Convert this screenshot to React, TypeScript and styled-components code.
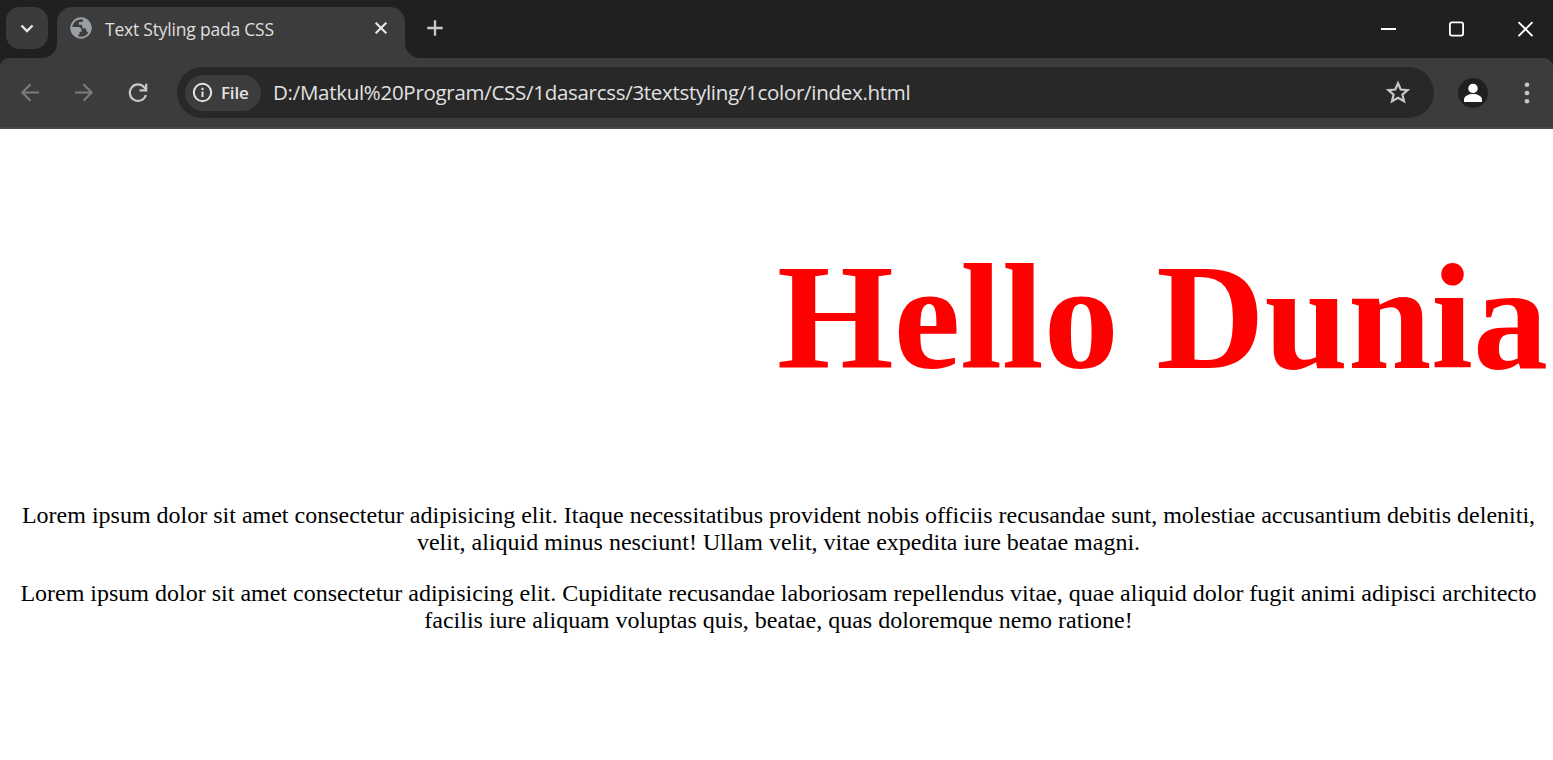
import React from "react";
import styled, { createGlobalStyle } from "styled-components";

const GlobalStyle = createGlobalStyle`
  * { box-sizing: border-box; }
  body { margin: 0; background: #fff; overflow: hidden; }
`;

const frame = "#1f2120";
const chrome = "#3c3c3c";

const Window = styled.div`
  width: 1553px;
  height: 760px;
  display: flex;
  flex-direction: column;
  background: #fff;
  overflow: hidden;
`;

const TitleBar = styled.header`
  flex: none;
  height: 58px;
  display: flex;
  align-items: flex-start;
  padding: 7px 0 0 6px;
  background: ${frame};
`;

const TabSearch = styled.button`
  width: 42px;
  height: 42px;
  margin-right: 9px;
  padding: 0;
  border: 0;
  border-radius: 14px;
  background: #3a3b3d;
  display: flex;
  align-items: center;
  justify-content: center;
`;

const Tab = styled.div`
  position: relative;
  width: 348px;
  height: 51px;
  display: flex;
  align-items: flex-start;
  padding: 9px 17px 0 13px;
  border-radius: 15px 15px 0 0;
  background: ${chrome};

  &::before, &::after {
    content: "";
    position: absolute;
    bottom: 0;
    width: 15px;
    height: 15px;
  }
  &::before {
    left: -15px;
    background: radial-gradient(circle at 0 0, transparent 14.5px, ${chrome} 15.5px);
  }
  &::after {
    right: -15px;
    background: radial-gradient(circle at 100% 0, transparent 14.5px, ${chrome} 15.5px);
  }
`;

const TabTitle = styled.span`
  flex: 1;
  margin-left: 12px;
  font: 17.5px/24px "Open Sans", sans-serif;
  letter-spacing: -0.21px;
  color: #dfdfdf;
  white-space: nowrap;
  padding-top: 1px;
`;

const CloseTab = styled.span`
  display: flex;
  padding-top: 5px;
`;

const NewTab = styled.span`
  display: flex;
  margin: 13px 0 0 22px;
`;

const WindowControls = styled.div`
  display: flex;
  margin: 14px 19px 0 auto;
  gap: 52px;
`;

const ToolbarBack = styled.div`
  flex: none;
  background: ${frame};
`;

const Toolbar = styled.div`
  height: 71px;
  display: flex;
  align-items: center;
  padding: 0 16px 2px 18px;
  border-bottom: 2px solid #484647;
  border-radius: 9px 9px 0 0;
  background: ${chrome};
`;

const NavButtons = styled.nav`
  display: flex;
  gap: 30px;
  width: 159px;
`;

const AddressBar = styled.div`
  width: 1257px;
  height: 51px;
  margin-top: 2px;
  display: flex;
  align-items: center;
  padding: 0 23px 0 8px;
  border-radius: 26px;
  background: #282828;
`;

const FileChip = styled.div`
  width: 76px;
  height: 36px;
  display: flex;
  align-items: center;
  gap: 8px;
  padding-left: 7px;
  border-radius: 18px;
  background: ${chrome};
  font: 600 17px/24px "Open Sans", sans-serif;
  letter-spacing: -0.2px;
  color: #e3e3e3;
`;

const Url = styled.span`
  flex: 1;
  margin-left: 12px;
  padding-bottom: 2px;
  font: 20.5px/28px "Open Sans", sans-serif;
  letter-spacing: -0.29px;
  color: #e1e1e1;
  white-space: nowrap;
`;

const Profile = styled.div`
  width: 30px;
  height: 30px;
  margin: 2px auto 0 24px;
  border-radius: 50%;
  background: ${frame};
  display: flex;
`;

const MenuIcon = styled.span`
  display: flex;
  padding-top: 2px;
`;

const Page = styled.main`
  flex: 1;
  padding: 0 4px 0 8px;
  font-family: "Liberation Serif", serif;
`;

const Heading = styled.h1`
  margin: 102px 1px 99px 0;
  font-size: 150px;
  line-height: 172px;
  font-weight: 700;
  color: #f00;
  text-align: right;
  white-space: nowrap;
`;

const Paragraph = styled.p`
  margin: 0 0 24px;
  font-size: 24px;
  line-height: 27px;
  color: #000;
  text-align: center;
`;

export default function App() {
  return (
    <Window>
      <GlobalStyle />
      <TitleBar>
        <TabSearch>
          <svg width="42" height="42" fill="none" stroke="#e8e8e8" strokeWidth="2.4">
            <path d="M15.5 18.5l5.5 5.5 5.5-5.5" />
          </svg>
        </TabSearch>
        <Tab>
          <svg width="23" height="24" viewBox="0 0 23 24">
            <circle cx="11" cy="12" r="9.7" fill="none" stroke="#9aa0a6" strokeWidth="2" />
            <path fill="#9aa0a6" d="M13.500 2L13.300 4.300C13.300 5.400 12.500 6 11.400 6H9.800C9.200 6 8.800 6.400 8.800 7V8.800H11C12 8.800 12.300 9.500 12.300 10.300V12.200H14.500C15.800 12.200 16.400 13 16.400 14.200V15.800H19.500L21.400 12A10.400 10.400 0 0 0 13.500 2Z" />
            <path fill="#9aa0a6" d="M1.500 11H8C10.300 11 11.600 12.400 11.600 14.500V15.700H9.600V17.600C9.600 18.500 9 19 8.200 19V21.500A10.300 10.300 0 0 1 1.500 11Z" />
          </svg>
          <TabTitle>Text Styling pada CSS</TabTitle>
          <CloseTab>
            <svg width="14" height="14" fill="none" stroke="#e8e8e8" strokeWidth="2.1">
              <path d="M1.700 1.700l10.600 10.600M12.300 1.700L1.700 12.300" />
            </svg>
          </CloseTab>
        </Tab>
        <NewTab>
          <svg width="16" height="16" fill="none" stroke="#c9c9c9" strokeWidth="2.3">
            <path d="M8 .3v15.400M.3 8h15.400" />
          </svg>
        </NewTab>
        <WindowControls>
          <svg width="17" height="16" fill="#fff">
            <path d="M1 7h15v2H1z" />
          </svg>
          <svg width="16" height="16" fill="none" stroke="#fff" strokeWidth="1.8">
            <rect x="0.900" y="1.400" width="13.200" height="13.200" rx="2" />
          </svg>
          <svg width="17" height="16" fill="none" stroke="#fff" strokeWidth="1.9">
            <path d="M1.500 1.200l14 14M15.500 1.200l-14 14" />
          </svg>
        </WindowControls>
      </TitleBar>
      <ToolbarBack>
        <Toolbar>
          <NavButtons>
            <svg width="24" height="24" fill="none" stroke="#7c7c7c" strokeWidth="2.100">
              <path d="M21 12.500H4.500M12.500 4.300l-8.200 8.200 8.200 8.200" />
            </svg>
            <svg width="24" height="24" fill="none" stroke="#7c7c7c" strokeWidth="2.100">
              <path d="M3 12.500h16.500M11.500 4.300l8.200 8.200-8.200 8.200" />
            </svg>
            <svg width="24" height="24" fill="none" stroke="#c7c7c7" strokeWidth="2.200">
              <path d="M19.900 15A8.200 8.200 0 1 1 18.500 7.600L20.300 9.600M20.200 3.700v6.700h-6.700" />
            </svg>
          </NavButtons>
          <AddressBar>
            <FileChip>
              <svg width="21" height="21" fill="none" stroke="#e3e3e3" strokeWidth="2">
                <circle cx="10.500" cy="10.500" r="8.700" />
                <path d="M10.500 9.500v5.500M10.500 5.800v2.100" />
              </svg>
              File
            </FileChip>
            <Url>D:/Matkul%20Program/CSS/1dasarcss/3textstyling/1color/index.html</Url>
            <svg width="26" height="26" viewBox="0 0 26 26" fill="none" stroke="#c7c7c7" strokeWidth="2.2">
              <path d="M13 3.200l2.700 6.300 6.900.6-5.200 4.500 1.600 6.700L13 17.800l-6 3.500 1.600-6.700-5.200-4.500 6.900-.6z" />
            </svg>
          </AddressBar>
          <Profile>
            <svg width="30" height="30" fill="#fff">
              <circle cx="15" cy="10.400" r="4.700" />
              <path d="M6 24v-2.600c0-3.300 5-5.300 9-5.300s9 2 9 5.300V24z" />
            </svg>
          </Profile>
          <MenuIcon>
            <svg width="20" height="24" fill="#c7c7c7">
              <circle cx="10" cy="3.800" r="2.300" />
              <circle cx="10" cy="12" r="2.300" />
              <circle cx="10" cy="20.300" r="2.300" />
            </svg>
          </MenuIcon>
        </Toolbar>
      </ToolbarBack>
      <Page>
        <Heading>Hello Dunia</Heading>
        <Paragraph>
          Lorem ipsum dolor sit amet consectetur adipisicing elit. Itaque necessitatibus provident nobis officiis
          recusandae sunt, molestiae accusantium debitis deleniti,
          <br />
          velit, aliquid minus nesciunt! Ullam velit, vitae expedita iure beatae magni.
        </Paragraph>
        <Paragraph>
          Lorem ipsum dolor sit amet consectetur adipisicing elit. Cupiditate recusandae laboriosam repellendus vitae,
          quae aliquid dolor fugit animi adipisci architecto
          <br />
          facilis iure aliquam voluptas quis, beatae, quas doloremque nemo ratione!
        </Paragraph>
      </Page>
    </Window>
  );
}
